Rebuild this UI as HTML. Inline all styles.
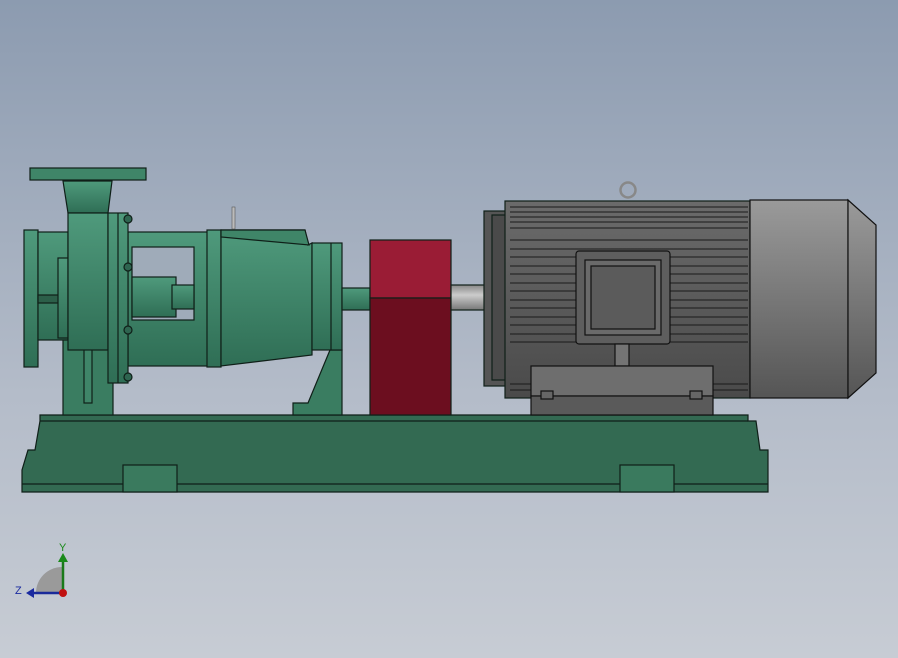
<!DOCTYPE html>
<html><head><style>
html,body{margin:0;padding:0;width:898px;height:658px;overflow:hidden}
body{background:linear-gradient(#8c9bb0,#b4bcc9 60%,#c7ccd4);font-family:"Liberation Sans",sans-serif}
</style></head><body>
<svg width="898" height="658" viewBox="0 0 898 658" xmlns="http://www.w3.org/2000/svg">
<defs>
<linearGradient id="g" x1="0" y1="0" x2="0" y2="1"><stop offset="0" stop-color="#4f9a7c"/><stop offset="1" stop-color="#2f6e55"/></linearGradient>
<linearGradient id="gm" x1="0" y1="0" x2="0" y2="1"><stop offset="0" stop-color="#6b6b6b"/><stop offset="1" stop-color="#4a4a4a"/></linearGradient>
<linearGradient id="gf" x1="0" y1="0" x2="0" y2="1"><stop offset="0" stop-color="#9a9a9a"/><stop offset="1" stop-color="#555"/></linearGradient>
<linearGradient id="gs" x1="0" y1="0" x2="0" y2="1"><stop offset="0" stop-color="#888"/><stop offset=".4" stop-color="#ccc"/><stop offset="1" stop-color="#777"/></linearGradient>
</defs>
<g stroke="#0f1f18" stroke-width="1.2">
<!-- base -->
<polygon points="40,415 748,415 748,421 756,421 760,450 768,450 768,492 22,492 22,470 28,450 35,450 40,421" fill="#336a52"/>
<line x1="40" y1="421" x2="748" y2="421"/>
<line x1="22" y1="484" x2="768" y2="484"/>
<rect x="123" y="465" width="54" height="27" fill="#3a7a5e"/>
<rect x="620" y="465" width="54" height="27" fill="#3a7a5e"/>
<!-- pump foot & support -->
<rect x="63" y="337" width="50" height="78" fill="#3a7d61"/>
<rect x="84" y="338" width="8" height="65" fill="#3f8568"/>
<polygon points="330,350 342,350 342,415 293,415 293,403 308,403" fill="#3a7d61"/>
<!-- bearing frame -->
<rect x="128" y="232" width="80" height="134" fill="url(#g)"/>
<rect x="132" y="247" width="62" height="73" fill="#9fabb9" stroke="#0f1f18"/>
<rect x="132" y="277" width="44" height="40" fill="url(#g)"/>
<rect x="172" y="285" width="22" height="24" fill="url(#g)"/>
<rect x="207" y="230" width="14" height="137" fill="url(#g)"/>
<polygon points="221,230 305,230 308,245 312,243 312,355 221,366" fill="url(#g)"/>
<polygon points="221,230 305,230 309,245 221,237" fill="#3f8568"/>
<rect x="232" y="207" width="3" height="22" fill="#bbb" stroke="#555" stroke-width=".6"/>
<rect x="312" y="243" width="30" height="107" fill="url(#g)"/>
<line x1="331" y1="243" x2="331" y2="350"/>
<rect x="342" y="288" width="28" height="22" fill="url(#g)"/>
<!-- volute -->
<rect x="24" y="230" width="14" height="137" fill="url(#g)"/>
<rect x="38" y="232" width="30" height="108" fill="url(#g)"/>
<rect x="38" y="295" width="30" height="8" fill="#2c5f49"/>
<rect x="58" y="258" width="10" height="80" fill="url(#g)"/>
<polygon points="63,181 112,181 108,213 68,213" fill="url(#g)"/>
<rect x="30" y="168" width="116" height="12" fill="#3f8568"/>
<rect x="68" y="213" width="40" height="137" fill="url(#g)"/>
<rect x="108" y="213" width="20" height="170" fill="url(#g)"/>
<line x1="118" y1="213" x2="118" y2="383"/>
<g fill="#2e6550"><circle cx="128" cy="219" r="4"/><circle cx="128" cy="267" r="4"/><circle cx="128" cy="330" r="4"/><circle cx="128" cy="377" r="4"/></g>
<!-- red guard -->
<rect x="370" y="240" width="81" height="58" fill="#9a1c35"/>
<rect x="370" y="298" width="81" height="117" fill="#6c0e1f"/>
<!-- shaft to motor -->
<rect x="451" y="285" width="34" height="25" fill="url(#gs)"/>
<!-- motor -->
<rect x="484" y="211" width="22" height="175" fill="#555"/>
<rect x="492" y="215" width="14" height="165" fill="#4a4a4a"/>
<rect x="505" y="201" width="245" height="197" fill="url(#gm)"/>
</g>
<g stroke="#1a1a1a" stroke-width="1">
<path d="M510 207H748M510 212H748M510 217H748M510 222H748M510 228H748M510 240H748M510 249H748M510 257H748M510 266H748M510 274H748M510 283H748M510 291H748M510 300H748M510 308H748M510 317H748M510 325H748M510 334H748M510 342H748M510 384H748M510 390H748"/>
</g>
<g stroke="#111" stroke-width="1.2">
<rect x="576" y="251" width="94" height="93" rx="3" fill="#5e5e5e"/>
<rect x="585" y="260" width="76" height="75" fill="#6a6a6a"/>
<rect x="591" y="266" width="64" height="63" fill="#5b5b5b"/>
<rect x="615" y="344" width="14" height="22" fill="#747474"/>
<rect x="531" y="366" width="182" height="30" fill="#6e6e6e"/>
<rect x="531" y="396" width="182" height="19" fill="#5a5a5a"/>
<rect x="541" y="391" width="12" height="8" fill="#666"/>
<rect x="690" y="391" width="12" height="8" fill="#666"/>
<rect x="750" y="200" width="98" height="198" fill="url(#gf)"/>
<polygon points="848,200 876,225 876,373 848,398" fill="url(#gf)"/>
<circle cx="628" cy="190" r="7.5" fill="none" stroke="#888" stroke-width="2.5"/>
</g>
<!-- triad -->
<path d="M36 593 A26 26 0 0 1 62 567 L62 593Z" fill="#9a9a9a"/>
<line x1="63" y1="593" x2="63" y2="560" stroke="#1a7a1a" stroke-width="2.5"/>
<polygon points="58,562 68,562 63,553" fill="#1a8a1a"/>
<line x1="63" y1="593" x2="32" y2="593" stroke="#1a2a9a" stroke-width="2.5"/>
<polygon points="34,588 34,598 26,593" fill="#1a2aa0"/>
<circle cx="63" cy="593" r="4" fill="#c01010"/>
<text x="59" y="551" font-size="11" fill="#1a8a1a" font-family="Liberation Sans">Y</text>
<text x="15" y="594" font-size="11" fill="#1a2aa0" font-family="Liberation Sans">Z</text>
</svg>
</body></html>
